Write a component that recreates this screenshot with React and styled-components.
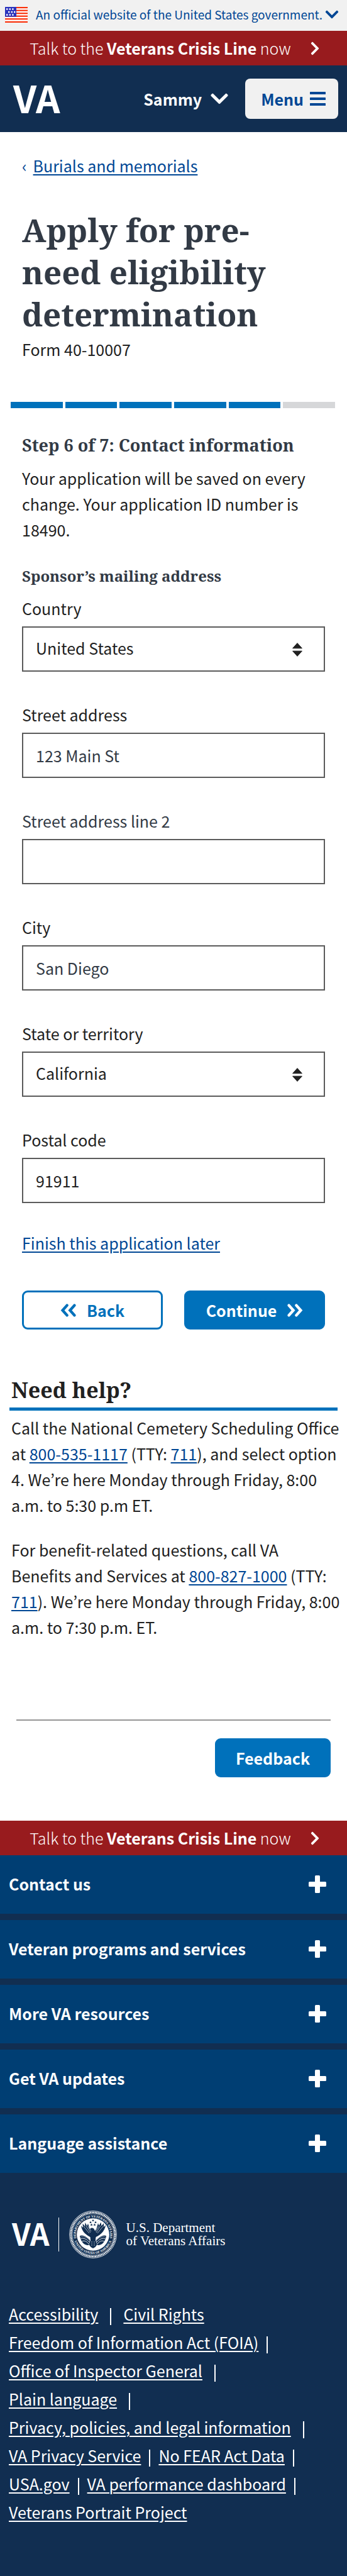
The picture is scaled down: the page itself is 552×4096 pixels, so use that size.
import React from "react";
import styled, { createGlobalStyle, css } from "styled-components";
import { FaChevronDown, FaChevronRight } from "react-icons/fa";

const color = {
  ink: "#212121",
  slate: "#323a45",
  link: "#004795",
  primary: "#0071bb",
  navy: "#112e51",
  footerBlue: "#003e73",
  crisis: "#981b1e",
  pale: "#f1f1f1",
  border: "#5b5b5b",
};

const sans = '"Noto Sans CJK JP", "Noto Sans", sans-serif';
const slab = '"Noto Serif", "DejaVu Serif", serif';

const GlobalStyle = createGlobalStyle`
  *, *::before, *::after { box-sizing: border-box; }
  body {
    margin: 0;
    background: #fff;
    color: ${color.ink};
    font-family: ${sans};
    font-size: 25px;
    line-height: 41px;
  }
  h1, h2, h3, p, ul { margin: 0; padding: 0; }
  ul { list-style: none; }
  button, input, select { font: inherit; margin: 0; }
  button { cursor: pointer; border: 0; background: none; padding: 0; }
  svg { display: block; flex: none; }
`;

const underline = css`
  text-decoration-line: underline;
  text-decoration-thickness: 2px;
  text-underline-offset: 3px;
`;

const Link = styled.a`
  color: ${color.link};
  ${underline}
`;

/* ---------- top of page ---------- */

const GovBanner = styled.button`
  display: flex;
  align-items: center;
  width: 100%;
  height: 49px;
  padding: 0 12px 3px 8px;
  background: ${color.pale};
  color: ${color.link};
  font-size: 19px;
  line-height: 28px;
  white-space: nowrap;
`;

const GovText = styled.span`
  flex: 1;
  margin-left: 13px;
  text-align: left;
`;

const CrisisBar = styled.a`
  display: flex;
  align-items: center;
  justify-content: center;
  gap: 26px;
  height: 55px;
  padding-left: 8px;
  background: ${color.crisis};
  color: #fff;
  font-weight: 300;
  text-decoration: none;
  white-space: nowrap;

  strong { font-weight: 700; }
`;

const Header = styled.header`
  display: flex;
  align-items: center;
  height: 106px;
  padding: 0 14px 0 21px;
  background: ${color.navy};
  color: #fff;
`;

const Wordmark = styled.a`
  color: #fff;
  padding-bottom: 6px;
  font-size: ${(p) => p.$size}px;
  font-weight: 700;
  line-height: 1;
  text-decoration: none;
`;

const AccountButton = styled.button`
  display: flex;
  align-items: center;
  gap: 12px;
  margin: 0 25px 0 auto;
  color: #fff;
  font-weight: 700;
`;

const MenuButton = styled.button`
  display: flex;
  align-items: center;
  gap: 10px;
  height: 64px;
  padding: 0 20px 0 25px;
  border-radius: 8px;
  background: ${color.pale};
  color: ${color.link};
  font-weight: 700;
`;

/* ---------- form ---------- */

const Breadcrumb = styled.nav`
  display: flex;
  gap: 10px;
  padding: 33px 35px 0;
  color: ${color.link};
`;

const TitleBlock = styled.div`
  padding: 48px 35px 0;
`;

const Title = styled.h1`
  color: ${color.slate};
  font: 700 51px/67px ${slab};
`;

const FormNumber = styled.p`
  margin-top: 2px;
`;

const Progress = styled.div`
  display: grid;
  grid-template-columns: repeat(6, 1fr);
  gap: 4px;
  margin: 63px 19px 0 17px;
`;

const Segment = styled.span`
  height: 10px;
  background: ${(p) => (p.$done ? color.primary : "#d6d7d9")};
`;

const Form = styled.form`
  padding: 42px 35px 0;
`;

const StepTitle = styled.h2`
  color: ${color.slate};
  font: 700 27px/34px ${slab};
`;

const SavedNote = styled.p`
  margin: 15px 0 36px;
`;

const GroupTitle = styled.h3`
  margin-bottom: 14px;
  color: ${color.slate};
  font: 700 24px/34px ${slab};
`;

const Fields = styled.div`
  display: grid;
  gap: 48px;
`;

const Field = styled.div`
  display: grid;
  gap: 8px;
`;

const Label = styled.label`
  color: ${(p) => (p.$muted ? color.slate : color.ink)};
`;

const control = css`
  width: 100%;
  height: 72px;
  padding: 0 20px;
  border: 2px solid ${color.border};
  border-radius: 0;
  background: #fff;
`;

const TextInput = styled.input`
  ${control}
  color: ${(p) => (p.$muted ? color.slate : color.ink)};
`;

const SelectBox = styled.div`
  position: relative;

  svg {
    position: absolute;
    top: 26px;
    right: 36px;
    pointer-events: none;
  }
`;

const Select = styled.select`
  ${control}
  padding-bottom: 4px;
  appearance: none;
  color: ${color.ink};
`;

const FinishLater = styled.p`
  margin-top: 43px;
`;

const Actions = styled.div`
  display: grid;
  grid-template-columns: 1fr 1fr;
  gap: 34px;
  margin-top: 55px;
`;

const Button = styled.button`
  display: flex;
  align-items: center;
  justify-content: center;
  gap: 17px;
  height: 62px;
  padding: 0 30px;
  border: 3px solid ${color.primary};
  border-radius: 9px;
  background: ${(p) => (p.$outline ? "#fff" : color.primary)};
  color: ${(p) => (p.$outline ? color.primary : "#fff")};
  font-weight: 700;
`;

/* ---------- help ---------- */

const Help = styled.section`
  padding: 72px 10px 0 15px;

  p { padding-left: 3px; }
  p + p { margin-top: 30px; }
`;

const HelpTitle = styled.h2`
  margin: 0 5px 7px 0;
  padding: 0 0 4px 3px;
  border-bottom: 5px solid ${color.primary};
  font: 700 34px/48px ${slab};
`;

const FeedbackArea = styled.div`
  display: flex;
  justify-content: flex-end;
  margin: 126px 26px 69px;
  padding-top: 28px;
  border-top: 2px solid #959595;
`;

/* ---------- footer ---------- */

const Footer = styled.footer`
  background: ${color.navy};
  color: #fff;
`;

const Accordion = styled.div`
  display: grid;
  gap: 10px;
`;

const AccordionButton = styled.button`
  display: flex;
  align-items: center;
  justify-content: space-between;
  height: 93px;
  padding: 0 33px 2px 14px;
  background: ${color.footerBlue};
  color: #fff;
  font-weight: 700;
`;

const Brand = styled.div`
  display: flex;
  align-items: center;
  margin-top: 60px;
  padding-left: 19px;
`;

const BrandRule = styled.span`
  width: 1px;
  height: 54px;
  margin: 0 16px 0 14px;
  background: #fff;
`;

const BrandName = styled.span`
  margin-left: 15px;
  font: 400 21px/21px "Liberation Serif", serif;
`;

const FooterLinks = styled.nav`
  padding: 66px 14px 82px;
`;

const LinkRow = styled.ul`
  display: flex;
  gap: ${(p) => (p.$wide ? 19 : 13)}px;
  line-height: 45px;
  white-space: nowrap;

  a { color: #fff; ${underline} }
`;

const LinkItem = styled.li`
  display: flex;
  align-items: center;
  gap: inherit;

  &:not([data-last])::after {
    content: "";
    width: 2px;
    height: 27px;
    margin-top: 8px;
    background: #fff;
  }
`;

/* ---------- drawings ---------- */

const Flag = () => (
  <svg width="36" height="25" viewBox="0 0 36 25" aria-hidden="true">
    <rect width="36" height="25" fill="#fff" />
    {[0, 4.6, 9.1, 13.6, 18.1, 22.8].map((y) => (
      <rect key={y} y={y} width="36" height="2.2" fill="#f9320c" />
    ))}
    <rect width="18" height="15.6" fill="#2a33bd" />
    {[[2, 2.3], [6.6, 2.3], [11.2, 2.3], [5, 6.9], [9.6, 6.9], [14, 6.9], [2, 11.4], [6.6, 11.4], [11.2, 11.4]].map(
      ([x, y]) => <rect key={`${x}-${y}`} x={x} y={y} width="2.4" height="2.4" fill="#fff" />
    )}
  </svg>
);

const Burger = () => (
  <svg width="25" height="22" viewBox="0 0 25 22" fill="currentColor" aria-hidden="true">
    {[0, 9, 18].map((y) => <rect key={y} y={y} width="25" height="4" rx="0.5" />)}
  </svg>
);

const Plus = () => (
  <svg width="28" height="28" viewBox="0 0 28 28" fill="currentColor" aria-hidden="true">
    <rect x="10" width="8" height="28" rx="1.5" />
    <rect y="10" width="28" height="8" rx="1.5" />
  </svg>
);

const SortArrows = () => (
  <svg width="16" height="22" viewBox="0 0 16 22" fill={color.ink} stroke={color.ink} strokeLinejoin="round" aria-hidden="true">
    <path d="M8 .6 15.4 8.8H.6Z" />
    <path d="M8 21.4 15.4 13.2H.6Z" />
  </svg>
);

const DoubleChevron = ({ flip }) => (
  <svg width="25" height="21" viewBox="0 0 25 21" fill="none" stroke="currentColor" strokeWidth="4.4" strokeLinecap="round" aria-hidden="true">
    {flip
      ? <path d="M2.6 2.6 9.6 10.5 2.6 18.4M14.4 2.6 21.4 10.5 14.4 18.4" />
      : <path d="M10.6 2.6 3.6 10.5 10.6 18.4M22.4 2.6 15.4 10.5 22.4 18.4" />}
  </svg>
);

const Seal = () => (
  <svg width="76" height="76" viewBox="0 0 76 76" role="img" aria-label="Seal">
    <defs>
      <path id="seal-top" d="M12 46.5A27.3 27.3 0 1 1 64 46.5" />
      <path id="seal-bottom" d="M8.2 46.5A31 31 0 0 0 67.8 46.5" />
    </defs>
    <g fill="none" stroke="#fff">
      <circle cx="38" cy="38" r="37.4" strokeWidth="0.8" />
      <circle cx="38" cy="38" r="35" strokeWidth="2.6" strokeDasharray="1.7 0.8" />
      <circle cx="38" cy="38" r="33" strokeWidth="0.5" />
    </g>
    <g fill="#fff" fontFamily="Liberation Serif" fontWeight="700" fontSize="5.2">
      <text textAnchor="middle"><textPath href="#seal-top" startOffset="50%">DEPARTMENT OF VETERANS AFFAIRS</textPath></text>
      <text textAnchor="middle"><textPath href="#seal-bottom" startOffset="50%">UNITED STATES OF AMERICA</textPath></text>
    </g>
    <circle cx="38" cy="38" r="25.8" fill="#fff" />
    <g fill={color.navy}>
      {[[38, 15.5], [34, 18.5], [42, 18.5], [35.5, 22.6], [40.5, 22.6]].map(([x, y]) => (
        <path key={`${x}-${y}`} transform={`translate(${x} ${y})`} d="M0-2 .6-.6 2-.6.9.3 1.3 1.8 0 .9-1.3 1.8-.9.3-2-.6-.6-.6Z" />
      ))}
      <path d="M37 43C28 41 20 33 19 24L22 27 21.5 20.5 25 25 25.5 19 28.5 24.5 30 20.5 32 27C33 31 36 33 38 33.5Z" />
      <path d="M39 43C48 41 57 33 58 23L55 26 55 20 51.5 24.5 50.5 18.5 47.5 24 46 20 44 27C43 31 40 33 38 33.5Z" />
      <path d="M33 29.5C35 26.5 39 27 40 30L43 38 42 47 44.5 54 41.5 58 38 60 34.5 58 31.5 54 34 47 33 38 31 33Z" />
      <path d="M17 40C22 38 28 42 33 47L31 55C25 56 18 50 17 40Z" />
      <path d="M59 40C54 38 48 42 43 47L45 55C51 56 58 50 59 40Z" />
    </g>
    <g fill="none" stroke="#fff">
      <path strokeWidth="0.6" d="M23 25 32 36M26.5 24 34 35M30 25 35 33M54 25 45 36M50 24 43 35M47 25 42 33" />
      <path strokeWidth="2.2" d="M15 30 33 44M61 30 43 45" />
      <path strokeWidth="0.8" d="M18 45Q25 42 32 50M20 49Q26 46 31 53M58 45Q51 42 44 50M56 49Q50 46 45 53" />
      <path strokeWidth="0.8" strokeDasharray="1 1" d="M18.5 42Q26 40 33 48M57.5 42Q50 40 43 48M36 49V57M40 49V57" />
    </g>
  </svg>
);

/* ---------- data ---------- */

const fields = [
  { id: "country", label: "Country", value: "United States", select: true },
  { id: "street", label: "Street address", value: "123 Main St", mutedValue: true },
  { id: "street2", label: "Street address line 2", value: "", mutedLabel: true },
  { id: "city", label: "City", value: "San Diego", mutedValue: true },
  { id: "state", label: "State or territory", value: "California", select: true },
  { id: "postal", label: "Postal code", value: "91911" },
];

const sections = [
  "Contact us",
  "Veteran programs and services",
  "More VA resources",
  "Get VA updates",
  "Language assistance",
];

const linkRows = [
  { wide: true, links: ["Accessibility", "Civil Rights"], closed: true },
  { links: ["Freedom of Information Act (FOIA)"] },
  { wide: true, links: ["Office of Inspector General"] },
  { wide: true, links: ["Plain language"] },
  { wide: true, links: ["Privacy, policies, and legal information"] },
  { links: ["VA Privacy Service", "No FEAR Act Data"] },
  { links: ["USA.gov", "VA performance dashboard"] },
  { links: ["Veterans Portrait Project"], closed: true },
];

const CrisisLine = () => (
  <CrisisBar href="#crisis">
    <span>Talk to the <strong>Veterans Crisis Line</strong> now</span>
    <FaChevronRight size={24} />
  </CrisisBar>
);

export default function App() {
  return (
    <>
      <GlobalStyle />
      <GovBanner type="button">
        <Flag />
        <GovText>An official website of the United States government.</GovText>
        <FaChevronDown size={24} />
      </GovBanner>
      <CrisisLine />
      <Header>
        <Wordmark href="#home" $size={60}>VA</Wordmark>
        <AccountButton type="button">Sammy <FaChevronDown size={32} /></AccountButton>
        <MenuButton type="button">Menu <Burger /></MenuButton>
      </Header>

      <main>
        <Breadcrumb>
          <span>‹</span>
          <Link href="#burials">Burials and memorials</Link>
        </Breadcrumb>
        <TitleBlock>
          <Title>Apply for pre-need eligibility determination</Title>
          <FormNumber>Form 40-10007</FormNumber>
        </TitleBlock>
        <Progress>
          {[1, 2, 3, 4, 5, 6].map((n) => <Segment key={n} $done={n < 6} />)}
        </Progress>

        <Form onSubmit={(e) => e.preventDefault()}>
          <StepTitle>Step 6 of 7: Contact information</StepTitle>
          <SavedNote>
            Your application will be saved on every change. Your application ID number is 18490.
          </SavedNote>
          <GroupTitle>Sponsor’s mailing address</GroupTitle>
          <Fields>
            {fields.map((f) => (
              <Field key={f.id}>
                <Label htmlFor={f.id} $muted={f.mutedLabel}>{f.label}</Label>
                {f.select ? (
                  <SelectBox>
                    <Select id={f.id} defaultValue={f.value}><option>{f.value}</option></Select>
                    <SortArrows />
                  </SelectBox>
                ) : (
                  <TextInput id={f.id} type="text" defaultValue={f.value} $muted={f.mutedValue} />
                )}
              </Field>
            ))}
          </Fields>
          <FinishLater><Link href="#later">Finish this application later</Link></FinishLater>
          <Actions>
            <Button type="button" $outline><DoubleChevron />Back</Button>
            <Button type="submit">Continue<DoubleChevron flip /></Button>
          </Actions>
        </Form>

        <Help>
          <HelpTitle>Need help?</HelpTitle>
          <p>
            Call the National Cemetery Scheduling Office at <Link href="tel:8005351117">800-535-1117</Link> (TTY:{" "}
            <Link href="tel:711">711</Link>), and select option 4. We’re here Monday through Friday, 8:00 a.m. to 5:30 p.m ET.
          </p>
          <p>
            For benefit-related questions, call VA Benefits and Services at{" "}
            <Link href="tel:8008271000">800-827-1000</Link> (TTY: <Link href="tel:711">711</Link>). We’re here Monday
            through Friday, 8:00 a.m. to 7:30 p.m. ET.
          </p>
        </Help>
        <FeedbackArea>
          <Button type="button">Feedback</Button>
        </FeedbackArea>
      </main>

      <CrisisLine />
      <Footer>
        <Accordion>
          {sections.map((s) => (
            <AccordionButton key={s} type="button" aria-expanded="false">{s}<Plus /></AccordionButton>
          ))}
        </Accordion>
        <Brand>
          <Wordmark href="#home" $size={48}>VA</Wordmark>
          <BrandRule />
          <Seal />
          <BrandName>U.S. Department<br />of Veterans Affairs</BrandName>
        </Brand>
        <FooterLinks>
          {linkRows.map((row) => (
            <LinkRow key={row.links[0]} $wide={row.wide}>
              {row.links.map((text, i) => (
                <LinkItem key={text} data-last={row.closed && i === row.links.length - 1 ? "" : undefined}>
                  <a href="#footer">{text}</a>
                </LinkItem>
              ))}
            </LinkRow>
          ))}
        </FooterLinks>
      </Footer>
    </>
  );
}
